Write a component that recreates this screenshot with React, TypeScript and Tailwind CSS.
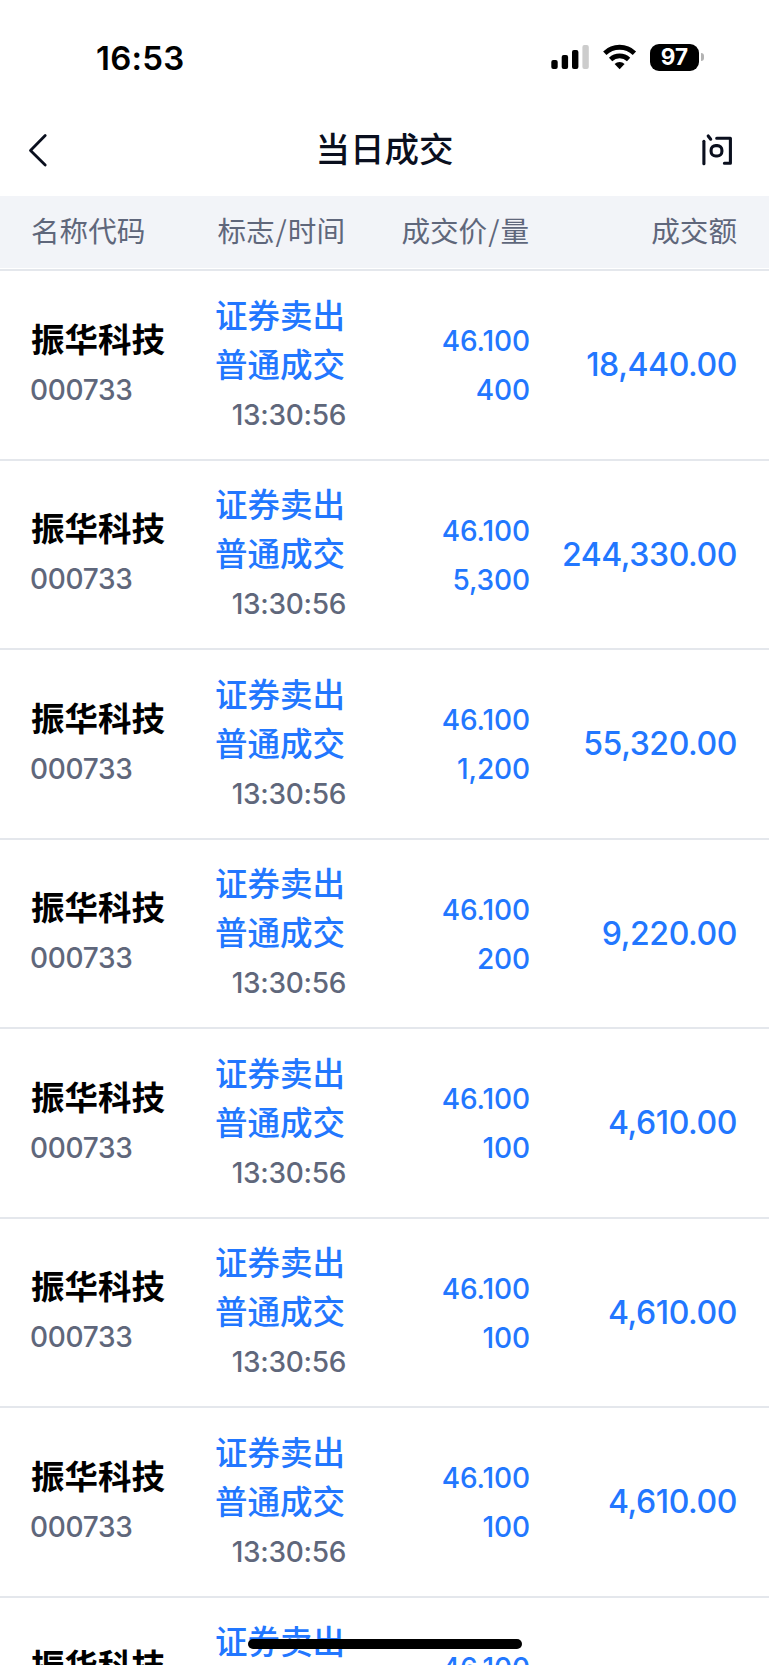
import React from 'react';

interface Trade {
  id: number;
  name: string;
  code: string;
  side: string;
  type: string;
  time: string;
  price: string;
  quantity: string;
  amount: string;
}

const base = { name: '振华科技', code: '000733', side: '证券卖出', type: '普通成交', time: '13:30:56', price: '46.100' };

const trades: Trade[] = [
  { id: 1, ...base, quantity: '400', amount: '18,440.00' },
  { id: 2, ...base, quantity: '5,300', amount: '244,330.00' },
  { id: 3, ...base, quantity: '1,200', amount: '55,320.00' },
  { id: 4, ...base, quantity: '200', amount: '9,220.00' },
  { id: 5, ...base, quantity: '100', amount: '4,610.00' },
  { id: 6, ...base, quantity: '100', amount: '4,610.00' },
  { id: 7, ...base, quantity: '100', amount: '4,610.00' },
  { id: 8, ...base, quantity: '100', amount: '4,610.00' },
];

const StatusBar: React.FC = () => (
  <div className="flex h-[104px] shrink-0 items-start justify-between pt-[36px] pr-[65px] pl-[96px] text-black">
    <span className="pt-px text-[33px] leading-[42px] font-semibold tracking-[0.2px]">16:53</span>
    <div className="flex items-center pt-[7px]">
      {/* Signal */}
      <svg width="39" height="28" viewBox="0 0 39 28">
        <rect x="0.3" y="17" width="6.4" height="9" rx="2" />
        <rect x="10.7" y="12" width="6.4" height="14" rx="2" />
        <rect x="21" y="7" width="6.4" height="19" rx="2" />
        <rect x="31.4" y="2" width="6.4" height="24" rx="2" fill="#cccccc" />
      </svg>
      {/* Wifi */}
      <svg className="ml-[13px]" width="34" height="28" viewBox="0 0 34 28" fill="none" stroke="#000" strokeWidth="4.8">
        <path d="M1.8 10.2a21.4 21.4 0 0 1 29.6 0" />
        <path d="M7.6 16.4a13.2 13.2 0 0 1 18 0" />
        <path d="M16.6 26.2l-5-5.1a7.3 7.3 0 0 1 10 0z" fill="#000" stroke="none" />
      </svg>
      {/* Battery */}
      <div className="ml-[13px] flex h-[27px] w-[49px] items-center justify-center rounded-[9px] bg-black pt-px text-[22.5px] leading-none font-bold text-white">
        97
      </div>
      <div className="ml-[2px] h-[8px] w-[3px] rounded-r-full bg-[#b3b3b3]" />
    </div>
  </div>
);

const TitleBar: React.FC = () => (
  <div className="flex h-[92px] shrink-0 items-center justify-between pr-[35px] pl-[27px] text-[#0a0f1e]">
    <svg width="38" height="34" viewBox="0 0 38 34" fill="none" stroke="currentColor" strokeWidth="2.8" strokeLinecap="round" strokeLinejoin="round">
      <path d="M18.2 2.5L3.5 17.5l14.7 14.5" />
    </svg>
    <h1 className="pl-[2px] text-[34.5px] leading-[48px] font-medium">当日成交</h1>
    <svg width="32" height="34" viewBox="0 0 32 34" fill="none" stroke="currentColor" strokeWidth="3.1" strokeLinecap="round" strokeLinejoin="round">
      <path d="M1.9 8.2v22.6" />
      <path d="M6.2 3l2.5 3.2" />
      <path d="M14.7 5.2h13.7v25.1h-6" />
      <rect x="9.1" y="12.6" width="10.8" height="10.4" rx="4.6" />
    </svg>
  </div>
);

const App: React.FC = () => {
  return (
    <div className="relative flex h-[1665px] w-[769px] flex-col overflow-hidden bg-white font-['Inter','Noto_Sans_CJK_SC',sans-serif]">
      <StatusBar />
      <TitleBar />

      {/* Column headings */}
      <div className="flex h-[73px] shrink-0 items-center border-b border-white bg-[#f2f4f8] px-[31px] pb-[3px] font-['Noto_Sans_CJK_SC',sans-serif] text-[28.6px] text-[#5f677b]">
        <div className="w-[154px]">名称代码</div>
        <div className="w-[160px] text-right">标志<span className="mx-[1px]">/</span>时间</div>
        <div className="w-[184px] text-right">成交价<span className="mx-[1px]">/</span>量</div>
        <div className="flex-1 pr-px text-right">成交额</div>
      </div>

      {/* Trades */}
      {trades.map((trade) => (
        <div key={trade.id} className="flex h-[189.5px] shrink-0 items-center border-t-2 border-[#e4e7ec] px-[31px] text-[28px] leading-[49px]">
          <div className="w-[154px] pt-px">
            <div className="text-[33.5px] font-bold whitespace-nowrap text-black">{trade.name}</div>
            <div className="-ml-px pt-px font-[450] tracking-[-0.3px] text-[#5f677b]">{trade.code}</div>
          </div>
          <div className="w-[160px] pt-[2px] text-right">
            <div className="text-[32.5px] font-medium text-[#2277ff]">{trade.side}</div>
            <div className="text-[32.5px] font-medium text-[#2277ff]">{trade.type}</div>
            <div className="-mr-px pt-px font-[450] tracking-[-0.3px] text-[#5f677b]">{trade.time}</div>
          </div>
          <div className="w-[185px] pt-[3px] text-right font-medium tracking-[-0.1px] text-[#2277ff]">
            <div>{trade.price}</div>
            <div>{trade.quantity}</div>
          </div>
          <div className="flex-1 pr-px text-right text-[32px] font-medium tracking-[-0.4px] text-[#2277ff]">{trade.amount}</div>
        </div>
      ))}

      {/* Home indicator */}
      <div className="absolute bottom-[16px] left-[248px] h-[10px] w-[274px] rounded-full bg-black" />
    </div>
  );
};

export default App;
